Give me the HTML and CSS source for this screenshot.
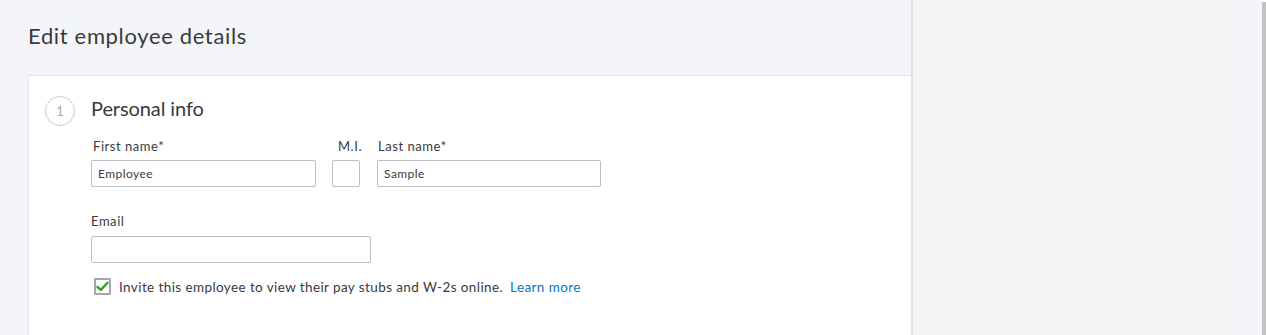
FILE: index.html
```html
<!DOCTYPE html>
<html lang="en">
<head>
  <meta charset="UTF-8" />
  <title>Edit employee details</title>
  <link rel="stylesheet" href="styles.css">
</head>
<body>
  <div class="page">
    <!-- Main editing column -->
    <div class="main">
      <h1 class="page-title">Edit employee details</h1>

      <div class="card">
        <div class="step">
          <div class="step-num">1</div>
          <div class="step-body">
            <h2 class="step-title">Personal info</h2>

            <div class="field-row">
              <div class="field field-first">
                <label class="field-label">First name*</label>
                <input class="text-input" type="text" value="Employee" />
              </div>
              <div class="field field-mi">
                <label class="field-label">M.I.</label>
                <input class="text-input" type="text" value="" />
              </div>
              <div class="field field-last">
                <label class="field-label">Last name*</label>
                <input class="text-input" type="text" value="Sample" />
              </div>
            </div>

            <div class="field field-email">
              <label class="field-label">Email</label>
              <input class="text-input" type="text" value="" />
            </div>

            <div class="invite">
              <span class="checkbox">
                <svg width="13" height="11" viewBox="0 0 13 11">
                  <path d="M1.5 5.8 L4.8 9 L11.5 1.8" fill="none" stroke="#2ca01c" stroke-width="2.4" stroke-linecap="round" stroke-linejoin="round"/>
                </svg>
              </span>
              <span class="invite-text">Invite this employee to view their pay stubs and W-2s online.</span>
              <a class="learn-more" href="#">Learn more</a>
            </div>
          </div>
        </div>
      </div>
    </div>

    <!-- Side area -->
    <div class="side"></div>
    <div class="side-strip"></div>
    <div class="scrollbar"></div>
  </div>
</body>
</html>
```

FILE: styles.css
```css
:root {
  --text: #393a3d;
  --muted: #8d9096;
  --border: #babec5;
  --panel: #f4f5f8;
  --green: #2ca01c;
  --link: #0077c5;
}

* { box-sizing: border-box; margin: 0; padding: 0; }

body {
  font-family: 'Lato', 'Open Sans', sans-serif;
  color: var(--text);
  overflow: hidden;
}

.page {
  display: flex;
  height: 335px;
}

/* Main column */
.main {
  width: 913px;
  background: var(--panel);
  border-right: 2px solid #e1e1e3;
  display: flex;
  flex-direction: column;
}

.page-title {
  font-size: 22px;
  font-weight: 400;
  line-height: 26px;
  letter-spacing: 0.65px;
  padding: 23px 0 26px 28px;
}

.card {
  flex: 1;
  margin-left: 28px;
  background: #fff;
  border-top: 1px solid #e3e4e8;
  border-left: 1px solid #e6e7eb;
}

.step {
  display: flex;
  gap: 16px;
  padding: 20px 0 0 16px;
}

.step-num {
  width: 30px;
  height: 30px;
  border: 1px solid #c9cacd;
  border-radius: 50%;
  display: flex;
  align-items: center;
  justify-content: center;
  font-size: 13px;
  color: #a6a8ac;
  flex-shrink: 0;
}

.step-title {
  font-size: 20px;
  font-weight: 400;
  line-height: 24px;
  letter-spacing: -0.1px;
  margin-bottom: 18px;
}

/* Fields */
.field-row {
  display: flex;
}

.field {
  display: flex;
  flex-direction: column;
}

.field-label {
  font-size: 13px;
  line-height: 16px;
  letter-spacing: 0.55px;
  padding-left: 2px;
  margin-bottom: 6px;
}

.field-first { width: 225px; }
.field-mi { width: 28px; margin-left: 16px; }
.field-mi .field-label { padding-left: 6px; }
.field-last { width: 224px; margin-left: 17px; }
.field-last .field-label { padding-left: 1px; }

.field-email {
  width: 280px;
  margin-top: 26px;
}
.field-email .field-label { padding-left: 0; margin-bottom: 7px; }

.text-input {
  width: 100%;
  height: 27px;
  border: 1px solid var(--border);
  border-radius: 2px;
  padding: 0 6px;
  font-family: inherit;
  font-size: 12px;
  letter-spacing: 0.45px;
  color: var(--text);
  background: #fff;
  outline: none;
}

/* Invite checkbox row */
.invite {
  display: flex;
  align-items: center;
  margin-top: 15px;
  padding-left: 3px;
  font-size: 13.5px;
  letter-spacing: 0.4px;
}

.checkbox {
  width: 17px;
  height: 17px;
  border: 2px solid #a3a6ab;
  border-radius: 1px;
  display: flex;
  align-items: center;
  justify-content: center;
  margin-right: 8px;
  background: #fff;
}

.learn-more {
  color: var(--link);
  text-decoration: none;
  margin-left: 7px;
}

/* Side area */
.side {
  width: 318px;
  background: #f5f5f5;
}

.side-strip {
  width: 31px;
  background: var(--panel);
}

.scrollbar {
  width: 4px;
  margin-top: 2px;
  background: #c2c2c2;
}
```
